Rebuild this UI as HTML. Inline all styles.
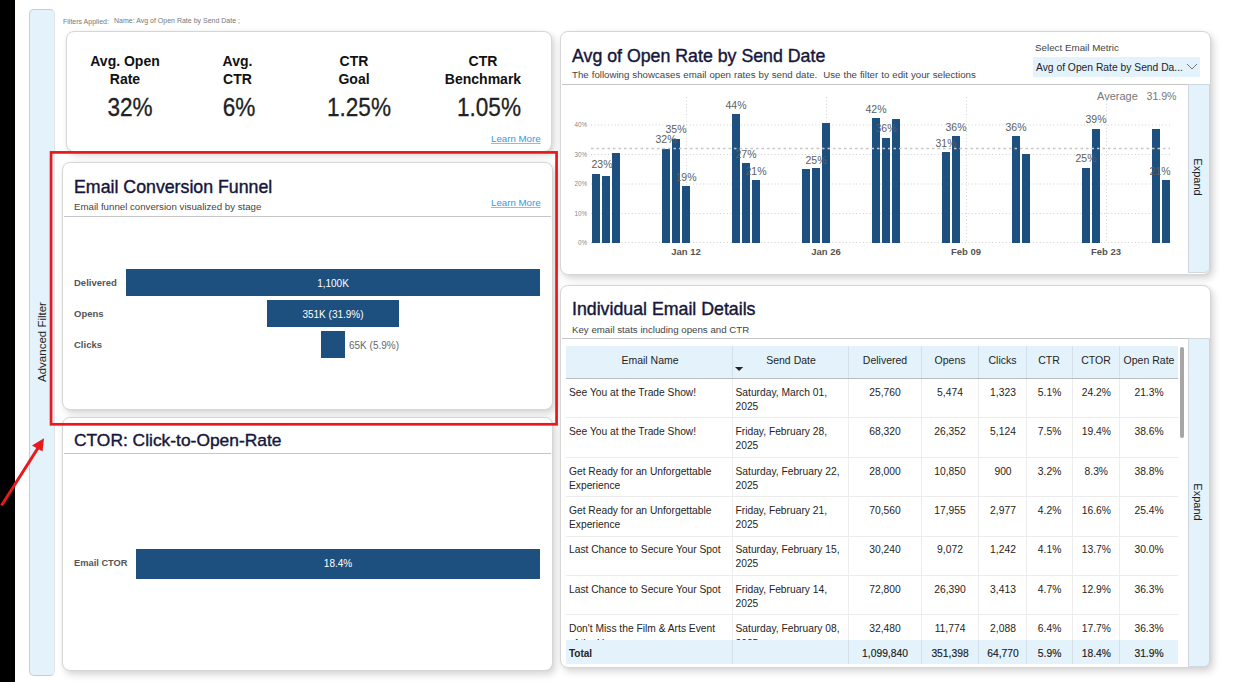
<!DOCTYPE html>
<html><head><meta charset="utf-8">
<style>
*{margin:0;padding:0;box-sizing:border-box}
html,body{width:1237px;height:682px;overflow:hidden;background:#fff;font-family:"Liberation Sans",sans-serif;color:#252423}
.a{position:absolute}
.card{position:absolute;background:#fff;border:1px solid #d6d6d6;border-radius:8px;box-shadow:3px 4px 7px rgba(0,0,0,0.15),0 0 5px rgba(0,0,0,0.04)}
.t{position:absolute;white-space:nowrap;line-height:1}
.title{position:absolute;white-space:nowrap;line-height:1;font-size:17.75px;color:#16163a;-webkit-text-stroke:0.4px #16163a}
.sub{position:absolute;white-space:nowrap;line-height:1;font-size:9.7px;color:#444}
.sep{position:absolute;height:1px;background:#c6c6c6}
.bar{position:absolute;background:#1d4f7f}
.c{transform:translate(-50%,-50%)}
.lb{position:absolute;white-space:nowrap;line-height:1;font-size:10.5px;color:#5e5e5e;transform:translate(-50%,-50%)}
.yl{position:absolute;white-space:nowrap;line-height:1;font-size:6.3px;color:#8a8a8a;transform:translate(-100%,-50%)}
.gl{position:absolute;left:591px;width:580px;height:0;border-top:1px dotted #d4d4d4}
.vl{position:absolute;top:97px;height:146px;width:0;border-left:1px dotted #d4d4d4}
.xl{position:absolute;white-space:nowrap;line-height:1;font-size:9.5px;font-weight:bold;color:#555;transform:translate(-50%,-50%)}
.link{position:absolute;white-space:nowrap;line-height:1;font-size:9.7px;color:#3399e0;text-decoration:underline;text-decoration-color:#7fc0ee}
.kh{position:absolute;white-space:nowrap;line-height:18px;font-size:14px;font-weight:bold;color:#111;text-align:center;transform:translateX(-50%)}
.kv{position:absolute;white-space:nowrap;line-height:1;font-size:25.8px;color:#222;-webkit-text-stroke:0.3px #222;transform:translate(-50%,-50%) scaleX(0.875)}
.fl{position:absolute;white-space:nowrap;line-height:1;font-size:9.5px;font-weight:bold;color:#555;transform:translateY(-50%)}
.bt{position:absolute;white-space:nowrap;line-height:1;font-size:10px;color:#fff;transform:translate(-50%,-50%)}
.exp{position:absolute;background:#e4f2fc;border:1px solid #cfd7dd}
.th{position:absolute;white-space:nowrap;line-height:1;font-size:10.5px;color:#252423;transform:translate(-50%,-50%)}
.td{position:absolute;white-space:nowrap;line-height:13.8px;font-size:10.25px;color:#252423}
.tn{position:absolute;white-space:nowrap;line-height:1;font-size:10.3px;color:#252423;transform:translate(-50%,-50%)}
.vd{position:absolute;width:1px;background:#ececec}
.hd{position:absolute;height:1px;background:#ececec}
</style></head>
<body>
<div class="a" style="left:0;top:0;width:15px;height:682px;background:#000"></div>

<div class="a" style="left:29px;top:9px;width:26px;height:667px;background:#e4f2fc;border:1px solid #c5ced6;border-right-color:#dde4ea;border-radius:5px"></div>
<div class="t c" style="left:43px;top:342px;font-size:11.5px;color:#252525;transform:translate(-50%,-50%) rotate(-90deg)">Advanced Filter</div>
<div class="t" style="left:63px;top:17.5px;font-size:7px;color:#777">Filters Applied:</div>
<div class="t" style="left:114px;top:17px;font-size:7px;color:#777">Name: Avg of Open Rate by Send Date ;</div>
<div class="card" style="left:66px;top:31px;width:486px;height:121px"></div>
<div class="kv" style="left:130.3px;top:107.6px">32%</div>
<div class="kv" style="left:239.4px;top:107.6px">6%</div>
<div class="kv" style="left:359px;top:107.6px">1.25%</div>
<div class="kv" style="left:489px;top:107.6px">1.05%</div>
<div class="kh" style="left:125px;top:52px">Avg. Open<br>Rate</div>
<div class="kh" style="left:237.5px;top:52px">Avg.<br>CTR</div>
<div class="kh" style="left:354px;top:52px">CTR<br>Goal</div>
<div class="kh" style="left:483px;top:52px">CTR<br>Benchmark</div>
<div class="link" style="left:491px;top:134px">Learn More</div>
<div class="card" style="left:62px;top:162px;width:491px;height:248px"></div>
<div class="title" style="left:74px;top:178.6px">Email Conversion Funnel</div>
<div class="sub" style="left:74px;top:202px">Email funnel conversion visualized by stage</div>
<div class="link" style="left:491px;top:197.7px">Learn More</div>
<div class="sep" style="left:64px;top:216px;width:487px"></div>
<div class="fl" style="left:74px;top:283px">Delivered</div>
<div class="fl" style="left:74px;top:314px">Opens</div>
<div class="fl" style="left:74px;top:345px">Clicks</div>
<div class="bar" style="left:126px;top:269px;width:414px;height:27px"></div>
<div class="bt" style="left:333px;top:284px">1,100K</div>
<div class="bar" style="left:267px;top:300px;width:132px;height:27px"></div>
<div class="bt" style="left:333px;top:315px">351K (31.9%)</div>
<div class="bar" style="left:321px;top:331px;width:24px;height:27px"></div>
<div class="t" style="left:349px;top:341px;font-size:10px;color:#666">65K (5.9%)</div>
<div class="card" style="left:62px;top:416.5px;width:491px;height:254px"></div>
<div class="title" style="left:74px;top:432px;font-size:17.4px">CTOR: Click-to-Open-Rate</div>
<div class="sep" style="left:64px;top:453px;width:487px"></div>
<div class="fl" style="left:74px;top:563.5px;font-size:9.3px">Email CTOR</div>
<div class="bar" style="left:136px;top:549px;width:404px;height:30px"></div>
<div class="bt" style="left:338px;top:564px">18.4%</div>
<svg class="a" style="left:0;top:0" width="600" height="440"><rect x="51.05" y="152.4" width="505.5" height="271.9" fill="none" stroke="#e6191d" stroke-width="2.7"/></svg>
<svg class="a" style="left:0;top:0" width="60" height="520" viewBox="0 0 60 520">
<line x1="1.5" y1="505.5" x2="38" y2="448" stroke="#e6191d" stroke-width="3" stroke-linecap="butt"/>
<polygon points="44,438.3 32,445.5 42.5,451.5" fill="#e6191d"/>
</svg>
<div class="card" style="left:560px;top:31px;width:651px;height:243.5px"></div>
<div class="title" style="left:572px;top:47.7px">Avg of Open Rate by Send Date</div>
<div class="sub" style="left:572px;top:70px;word-spacing:0.3px">The following showcases email open rates by send date.&nbsp; Use the filter to edit your selections</div>
<div class="t" style="left:1035px;top:43px;font-size:9.8px;color:#444">Select Email Metric</div>
<div class="a" style="left:1033px;top:57px;width:167px;height:20px;background:#e4f2fc"></div>
<div class="t" style="left:1036px;top:63px;font-size:10.3px;color:#252423">Avg of Open Rate by Send Da...</div>
<svg class="a" style="left:1186px;top:63px" width="12" height="8" viewBox="0 0 12 8"><polyline points="1,1 6,6 11,1" fill="none" stroke="#555" stroke-width="0.8"/></svg>
<div class="sep" style="left:562px;top:84px;width:647px"></div>
<div class="exp" style="left:1188px;top:84px;width:22px;height:189px;border-bottom-right-radius:6px"></div>
<div class="t" style="left:1197px;top:177px;font-size:11px;color:#222;transform:translate(-50%,-50%) rotate(90deg)">Expand</div>
<div class="t" style="left:1097px;top:91px;font-size:11px;color:#777">Average</div>
<div class="t" style="left:1146.5px;top:91px;font-size:10.6px;color:#777">31.9%</div>
<div class="yl" style="left:587px;top:242.5px">0%</div>
<div class="yl" style="left:587px;top:213.5px">10%</div>
<div class="yl" style="left:587px;top:184px">20%</div>
<div class="yl" style="left:587px;top:154.5px">30%</div>
<div class="yl" style="left:587px;top:125px">40%</div>
<svg class="a" style="left:0;top:0" width="1237" height="300"><line x1="591" y1="242.5" x2="1170" y2="242.5" stroke="#d0d0d0" stroke-width="1" stroke-dasharray="1 2.4"/><line x1="591" y1="213.5" x2="1170" y2="213.5" stroke="#d0d0d0" stroke-width="1" stroke-dasharray="1 2.4"/><line x1="591" y1="184" x2="1170" y2="184" stroke="#d0d0d0" stroke-width="1" stroke-dasharray="1 2.4"/><line x1="591" y1="154.5" x2="1170" y2="154.5" stroke="#d0d0d0" stroke-width="1" stroke-dasharray="1 2.4"/><line x1="591" y1="125" x2="1170" y2="125" stroke="#d0d0d0" stroke-width="1" stroke-dasharray="1 2.4"/><line x1="686.5" y1="97" x2="686.5" y2="243" stroke="#d0d0d0" stroke-width="1" stroke-dasharray="1 2.4"/><line x1="826.5" y1="97" x2="826.5" y2="243" stroke="#d0d0d0" stroke-width="1" stroke-dasharray="1 2.4"/><line x1="966.5" y1="97" x2="966.5" y2="243" stroke="#d0d0d0" stroke-width="1" stroke-dasharray="1 2.4"/><line x1="1106.5" y1="97" x2="1106.5" y2="243" stroke="#d0d0d0" stroke-width="1" stroke-dasharray="1 2.4"/></svg>
<div class="bar" style="left:592px;top:173.8px;width:8px;height:69.19999999999999px"></div>
<div class="bar" style="left:602px;top:176.4px;width:8px;height:66.6px"></div>
<div class="bar" style="left:612px;top:152.6px;width:8px;height:90.4px"></div>
<div class="bar" style="left:662px;top:148.9px;width:8px;height:94.1px"></div>
<div class="bar" style="left:672px;top:138.6px;width:8px;height:104.4px"></div>
<div class="bar" style="left:682px;top:186px;width:8px;height:57px"></div>
<div class="bar" style="left:732px;top:114px;width:8px;height:129px"></div>
<div class="bar" style="left:742px;top:163.4px;width:8px;height:79.6px"></div>
<div class="bar" style="left:752px;top:180px;width:8px;height:63px"></div>
<div class="bar" style="left:802px;top:168.9px;width:8px;height:74.1px"></div>
<div class="bar" style="left:812px;top:168.4px;width:8px;height:74.6px"></div>
<div class="bar" style="left:822px;top:122.7px;width:8px;height:120.3px"></div>
<div class="bar" style="left:872px;top:118.2px;width:8px;height:124.8px"></div>
<div class="bar" style="left:882px;top:137.8px;width:8px;height:105.19999999999999px"></div>
<div class="bar" style="left:892px;top:118.5px;width:8px;height:124.5px"></div>
<div class="bar" style="left:942px;top:152.3px;width:8px;height:90.69999999999999px"></div>
<div class="bar" style="left:952px;top:136px;width:8px;height:107px"></div>
<div class="bar" style="left:1012px;top:136px;width:8px;height:107px"></div>
<div class="bar" style="left:1022px;top:154.4px;width:8px;height:88.6px"></div>
<div class="bar" style="left:1082px;top:167.8px;width:8px;height:75.19999999999999px"></div>
<div class="bar" style="left:1092px;top:128.5px;width:8px;height:114.5px"></div>
<div class="bar" style="left:1152px;top:129px;width:8px;height:114px"></div>
<div class="bar" style="left:1162px;top:179.5px;width:8px;height:63.5px"></div>
<svg class="a" style="left:0;top:0" width="1237" height="300"><line x1="591" y1="148.5" x2="1170" y2="148.5" stroke="#c6c6c6" stroke-width="1.6" stroke-dasharray="2.5 3"/></svg>
<div class="lb" style="left:602px;top:164px">23%</div>
<div class="lb" style="left:666px;top:139px">32%</div>
<div class="lb" style="left:676px;top:128.5px">35%</div>
<div class="lb" style="left:686px;top:176.8px">19%</div>
<div class="lb" style="left:736px;top:104.8px">44%</div>
<div class="lb" style="left:746px;top:154px">27%</div>
<div class="lb" style="left:756px;top:170.8px">21%</div>
<div class="lb" style="left:816px;top:159.7px">25%</div>
<div class="lb" style="left:876px;top:109.3px">42%</div>
<div class="lb" style="left:886px;top:128px">36%</div>
<div class="lb" style="left:946px;top:142.5px">31%</div>
<div class="lb" style="left:956px;top:126.7px">36%</div>
<div class="lb" style="left:1016px;top:126.7px">36%</div>
<div class="lb" style="left:1086px;top:157.6px">25%</div>
<div class="lb" style="left:1096px;top:118.8px">39%</div>
<div class="lb" style="left:1160px;top:171px">21%</div>
<div class="xl" style="left:686px;top:251.5px">Jan 12</div>
<div class="xl" style="left:826px;top:251.5px">Jan 26</div>
<div class="xl" style="left:966px;top:251.5px">Feb 09</div>
<div class="xl" style="left:1106px;top:251.5px">Feb 23</div>
<div class="card" style="left:560px;top:285px;width:651px;height:383px"></div>
<div class="title" style="left:572px;top:301px">Individual Email Details</div>
<div class="sub" style="left:572px;top:325px">Key email stats including opens and CTR</div>
<div class="sep" style="left:562px;top:338px;width:627px"></div>
<div class="exp" style="left:1188px;top:338px;width:22px;height:329px;border-bottom-right-radius:6px"></div>
<div class="t" style="left:1197px;top:501.5px;font-size:11px;color:#222;transform:translate(-50%,-50%) rotate(90deg)">Expand</div>
<div class="a" style="left:566px;top:346px;width:612px;height:33px;background:#e4f2fc;border-bottom:1px solid #bdbdbd"></div>
<div class="vd" style="left:732px;top:346px;height:32px;background:#d5e1ea"></div>
<div class="vd" style="left:732px;top:379px;height:261px;background:#ededed"></div>
<div class="vd" style="left:848px;top:346px;height:32px;background:#d5e1ea"></div>
<div class="vd" style="left:848px;top:379px;height:261px;background:#ededed"></div>
<div class="vd" style="left:921px;top:346px;height:32px;background:#d5e1ea"></div>
<div class="vd" style="left:921px;top:379px;height:261px;background:#ededed"></div>
<div class="vd" style="left:978px;top:346px;height:32px;background:#d5e1ea"></div>
<div class="vd" style="left:978px;top:379px;height:261px;background:#ededed"></div>
<div class="vd" style="left:1026px;top:346px;height:32px;background:#d5e1ea"></div>
<div class="vd" style="left:1026px;top:379px;height:261px;background:#ededed"></div>
<div class="vd" style="left:1072px;top:346px;height:32px;background:#d5e1ea"></div>
<div class="vd" style="left:1072px;top:379px;height:261px;background:#ededed"></div>
<div class="vd" style="left:1119px;top:346px;height:32px;background:#d5e1ea"></div>
<div class="vd" style="left:1119px;top:379px;height:261px;background:#ededed"></div>
<div class="th" style="left:650px;top:360px">Email Name</div>
<div class="th" style="left:791px;top:360px">Send Date</div>
<div class="th" style="left:885px;top:360px">Delivered</div>
<div class="th" style="left:950px;top:360px">Opens</div>
<div class="th" style="left:1002.5px;top:360px">Clicks</div>
<div class="th" style="left:1049px;top:360px">CTR</div>
<div class="th" style="left:1096px;top:360px">CTOR</div>
<div class="th" style="left:1149px;top:360px">Open Rate</div>
<svg class="a" style="left:734px;top:366px" width="11" height="6" viewBox="0 0 11 6"><polygon points="1,1 9.2,1 5.1,5" fill="#252423"/></svg>
<div class="a" style="left:566px;top:379px;width:612px;height:261px;overflow:hidden">
<div class="td" style="left:3px;top:7px;">See You at the Trade Show!<br></div>
<div class="td" style="left:169.5px;top:7px;">Saturday, March 01,<br>2025</div>
<div class="tn" style="left:319px;top:14px">25,760</div>
<div class="tn" style="left:384px;top:14px">5,474</div>
<div class="tn" style="left:437px;top:14px">1,323</div>
<div class="tn" style="left:483.5999999999999px;top:14px">5.1%</div>
<div class="tn" style="left:530.3px;top:14px">24.2%</div>
<div class="tn" style="left:583px;top:14px">21.3%</div>
<div class="hd" style="left:0;top:38px;width:612px"></div>
<div class="td" style="left:3px;top:46px;">See You at the Trade Show!<br></div>
<div class="td" style="left:169.5px;top:46px;">Friday, February 28,<br>2025</div>
<div class="tn" style="left:319px;top:53px">68,320</div>
<div class="tn" style="left:384px;top:53px">26,352</div>
<div class="tn" style="left:437px;top:53px">5,124</div>
<div class="tn" style="left:483.5999999999999px;top:53px">7.5%</div>
<div class="tn" style="left:530.3px;top:53px">19.4%</div>
<div class="tn" style="left:583px;top:53px">38.6%</div>
<div class="hd" style="left:0;top:78px;width:612px"></div>
<div class="td" style="left:3px;top:86px;">Get Ready for an Unforgettable<br>Experience</div>
<div class="td" style="left:169.5px;top:86px;">Saturday, February 22,<br>2025</div>
<div class="tn" style="left:319px;top:93px">28,000</div>
<div class="tn" style="left:384px;top:93px">10,850</div>
<div class="tn" style="left:437px;top:93px">900</div>
<div class="tn" style="left:483.5999999999999px;top:93px">3.2%</div>
<div class="tn" style="left:530.3px;top:93px">8.3%</div>
<div class="tn" style="left:583px;top:93px">38.8%</div>
<div class="hd" style="left:0;top:117px;width:612px"></div>
<div class="td" style="left:3px;top:125px;">Get Ready for an Unforgettable<br>Experience</div>
<div class="td" style="left:169.5px;top:125px;">Friday, February 21,<br>2025</div>
<div class="tn" style="left:319px;top:132px">70,560</div>
<div class="tn" style="left:384px;top:132px">17,955</div>
<div class="tn" style="left:437px;top:132px">2,977</div>
<div class="tn" style="left:483.5999999999999px;top:132px">4.2%</div>
<div class="tn" style="left:530.3px;top:132px">16.6%</div>
<div class="tn" style="left:583px;top:132px">25.4%</div>
<div class="hd" style="left:0;top:157px;width:612px"></div>
<div class="td" style="left:3px;top:164px;">Last Chance to Secure Your Spot<br></div>
<div class="td" style="left:169.5px;top:164px;">Saturday, February 15,<br>2025</div>
<div class="tn" style="left:319px;top:171px">30,240</div>
<div class="tn" style="left:384px;top:171px">9,072</div>
<div class="tn" style="left:437px;top:171px">1,242</div>
<div class="tn" style="left:483.5999999999999px;top:171px">4.1%</div>
<div class="tn" style="left:530.3px;top:171px">13.7%</div>
<div class="tn" style="left:583px;top:171px">30.0%</div>
<div class="hd" style="left:0;top:196px;width:612px"></div>
<div class="td" style="left:3px;top:204px;">Last Chance to Secure Your Spot<br></div>
<div class="td" style="left:169.5px;top:204px;">Friday, February 14,<br>2025</div>
<div class="tn" style="left:319px;top:211px">72,800</div>
<div class="tn" style="left:384px;top:211px">26,390</div>
<div class="tn" style="left:437px;top:211px">3,413</div>
<div class="tn" style="left:483.5999999999999px;top:211px">4.7%</div>
<div class="tn" style="left:530.3px;top:211px">12.9%</div>
<div class="tn" style="left:583px;top:211px">36.3%</div>
<div class="hd" style="left:0;top:235px;width:612px"></div>
<div class="td" style="left:3px;top:241.6px;line-height:15.6px;">Don't Miss the Film &amp; Arts Event<br>of the Year</div>
<div class="td" style="left:169.5px;top:241.6px;line-height:15.6px;">Saturday, February 08,<br>2025</div>
<div class="tn" style="left:319px;top:249.5px">32,480</div>
<div class="tn" style="left:384px;top:249.5px">11,774</div>
<div class="tn" style="left:437px;top:249.5px">2,088</div>
<div class="tn" style="left:483.5999999999999px;top:249.5px">6.4%</div>
<div class="tn" style="left:530.3px;top:249.5px">17.7%</div>
<div class="tn" style="left:583px;top:249.5px">36.3%</div>
</div>
<div class="a" style="left:566px;top:640px;width:612px;height:24px;background:#e4f2fc"></div>
<div class="vd" style="left:732px;top:640px;height:24px;background:#d5e1ea"></div>
<div class="vd" style="left:848px;top:640px;height:24px;background:#d5e1ea"></div>
<div class="vd" style="left:921px;top:640px;height:24px;background:#d5e1ea"></div>
<div class="vd" style="left:978px;top:640px;height:24px;background:#d5e1ea"></div>
<div class="vd" style="left:1026px;top:640px;height:24px;background:#d5e1ea"></div>
<div class="vd" style="left:1072px;top:640px;height:24px;background:#d5e1ea"></div>
<div class="vd" style="left:1119px;top:640px;height:24px;background:#d5e1ea"></div>
<div class="t" style="left:569px;top:649px;font-size:10px;font-weight:bold;color:#252423">Total</div>
<div class="tn" style="left:885px;top:654px;color:#1a1a1a;-webkit-text-stroke:0.15px #1a1a1a">1,099,840</div>
<div class="tn" style="left:950px;top:654px;color:#1a1a1a;-webkit-text-stroke:0.15px #1a1a1a">351,398</div>
<div class="tn" style="left:1003px;top:654px;color:#1a1a1a;-webkit-text-stroke:0.15px #1a1a1a">64,770</div>
<div class="tn" style="left:1049.6px;top:654px;color:#1a1a1a;-webkit-text-stroke:0.15px #1a1a1a">5.9%</div>
<div class="tn" style="left:1096.3px;top:654px;color:#1a1a1a;-webkit-text-stroke:0.15px #1a1a1a">18.4%</div>
<div class="tn" style="left:1149px;top:654px;color:#1a1a1a;-webkit-text-stroke:0.15px #1a1a1a">31.9%</div>
<div class="a" style="left:1180px;top:347px;width:4px;height:91px;background:#a6a6a6;border-radius:2px"></div>
</body></html>
